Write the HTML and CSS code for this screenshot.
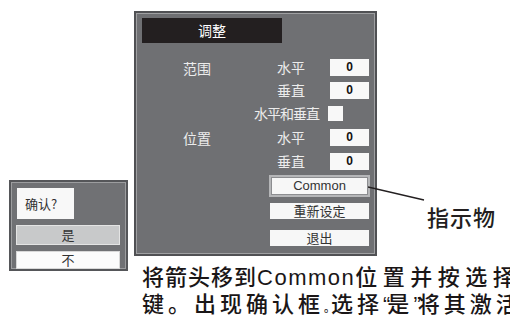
FILE: index.html
```html
<!DOCTYPE html>
<html lang="zh">
<head>
    <meta charset="UTF-8">
    <title>调整</title>
    <link rel="stylesheet" href="styles.css">
</head>
<body>
<div class="page">
    <div class="dialog">
        <div class="ask">确认?</div>
        <div class="dbtn on">是</div>
        <div class="dbtn">不</div>
    </div>
    <div class="main">
        <div class="figure">
            <div class="panel">
                <div class="title">调整</div>
                <div class="row r1"><span class="group">范围</span><span class="name">水平</span><span class="val">0</span></div>
                <div class="row"><span class="name">垂直</span><span class="val">0</span></div>
                <div class="row both"><span class="name">水平和垂直</span><span class="check"></span></div>
                <div class="row r4"><span class="group">位置</span><span class="name">水平</span><span class="val">0</span></div>
                <div class="row r4"><span class="name">垂直</span><span class="val">0</span></div>
                <div class="btn common">Common</div>
                <div class="btn reset">重新设定</div>
                <div class="btn quit">退出</div>
            </div>
            <div class="callout">指示物</div>
            <!-- 引线 -->
            <svg class="leader" width="70" height="30" viewBox="0 0 70 30">
                <line x1="0" y1="2" x2="56" y2="15" stroke="#231f20" stroke-width="1.3"/>
            </svg>
        </div>
        <div class="caption">
            <div class="l1"><span class="tight">将箭头移到</span><span class="latin">Common</span>位置并按选择</div>
            <div class="l2">键。出现确认框<span class="dot">。</span>选择<span class="q">“</span>是<span class="q">”</span>将其激活</div>
        </div>
    </div>
</div>
</body>
</html>
```

FILE: styles.css
```css
html, body{
    margin: 0;
    padding: 0;
    overflow: hidden;
    background: #fff;
}
body{
    font-family: "Noto Sans CJK SC", "Noto Sans", sans-serif;
}
.page{
    display: flex;
    padding-top: 11px;
    width: 510px;
    height: 315px;
    overflow: hidden;
}

/* 确认框 */
.dialog{
    flex: none;
    width: 115px;
    height: 87px;
    margin: 169px 0 0 9px;
    background: #707174;
    border: 2px solid #555659;
    box-shadow: inset 0 0 0 1px #9c9d9f;
}
.ask{
    width: 57px;
    height: 31px;
    margin: 6px 0 0 6px;
    background: #f8f8f8;
    color: #333;
    font-size: 13px;
    line-height: 31px;
    padding-left: 8px;
    box-sizing: border-box;
}
.dbtn{
    width: 102px;
    height: 16px;
    margin: 6px 0 0 5px;
    background: #fbfbfb;
    border: 1px solid #d8d8d8;
    color: #333;
    font-size: 13px;
    line-height: 16px;
    text-align: center;
}
.dbtn.on{
    height: 18px;
    line-height: 18px;
    background: #c8c9ca;
    border-color: #e4e4e4;
}

.main{
    flex: none;
    width: 376px;
    margin-left: 6px;
    overflow: hidden;
}
.figure{
    position: relative;
    display: flex;
}

/* 调整菜单 */
.panel{
    flex: none;
    width: 239px;
    height: 241px;
    background: #6f7073;
    border: 2px solid #505154;
    box-shadow: inset 0 0 0 1px #9fa0a2;
}
.title{
    width: 140px;
    height: 25px;
    margin: 5px 0 0 6px;
    background: #231f20;
    color: #fff;
    font-size: 14px;
    line-height: 25px;
    text-align: center;
}
.row{
    display: flex;
    align-items: center;
    height: 17px;
    margin-top: 6px;
    padding-right: 6px;
    color: #ececec;
    font-size: 14px;
}
.row.r1{
    margin-top: 16px;
}
.row.r4{
    margin-top: 7px;
}
.group{
    margin-left: 47px;
}
.name{
    margin-left: auto;
    line-height: 17px;
}
.val{
    width: 39px;
    height: 17px;
    margin-left: 25px;
    background: #f8f8f8;
    color: #111;
    font: bold 12px/17px "Liberation Sans", sans-serif;
    text-align: center;
}
.row.both{
    padding-right: 32px;
}
.row.both .name{
    letter-spacing: -1px;
}
.check{
    width: 15px;
    height: 15px;
    margin-left: 9px;
    background: #f8f8f8;
}
.btn{
    width: 99px;
    height: 16px;
    margin: 6px 6px 0 auto;
    background: #f7f7f7;
    color: #333;
    font-size: 13px;
    line-height: 16px;
    text-align: center;
}
.btn.common{
    width: 97px;
    height: 18px;
    margin-top: 5px;
    margin-right: 5px;
    border: 2px solid #b5b6b8;
    box-shadow: inset 0 0 0 1px #8c8d90;
    font-family: "Liberation Sans", sans-serif;
    line-height: 18px;
}
.btn.quit{
    margin-top: 11px;
}

.callout{
    margin: 194px 0 0 50px;
    color: #231f20;
    font-size: 22px;
    line-height: 22px;
    font-weight: 500;
    letter-spacing: 1px;
}
.leader{
    position: absolute;
    left: 234px;
    top: 174px;
}

/* 说明文字 */
.caption{
    margin: 8px 0 0 8px;
    color: #1a1617;
    font-family: "Liberation Sans", "Noto Sans CJK SC", sans-serif;
    font-size: 22px;
    line-height: 27px;
    font-weight: 500;
    white-space: nowrap;
}
.caption .l1{
    letter-spacing: 5.5px;
}
.caption .l2{
    letter-spacing: 4px;
}
.caption .tight{
    letter-spacing: 1px;
}
.caption .latin{
    letter-spacing: 1.5px;
}
.caption .dot{
    font-size: 11px;
    letter-spacing: -4px;
}
.caption .q{
    letter-spacing: -3px;
}
```
